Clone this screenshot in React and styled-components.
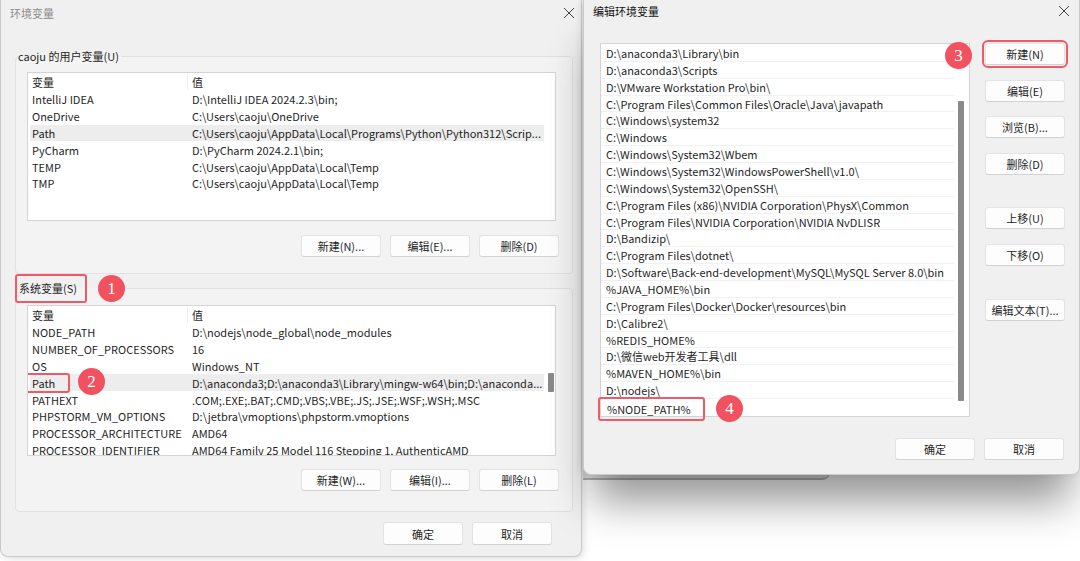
import React from "react";
import styled, { createGlobalStyle } from "styled-components";

const userVars = [
  ["IntelliJ IDEA", "D:\\IntelliJ IDEA 2024.2.3\\bin;"],
  ["OneDrive", "C:\\Users\\caoju\\OneDrive"],
  ["Path", "C:\\Users\\caoju\\AppData\\Local\\Programs\\Python\\Python312\\Scrip...", true],
  ["PyCharm", "D:\\PyCharm 2024.2.1\\bin;"],
  ["TEMP", "C:\\Users\\caoju\\AppData\\Local\\Temp"],
  ["TMP", "C:\\Users\\caoju\\AppData\\Local\\Temp"],
];

const sysVars = [
  ["NODE_PATH", "D:\\nodejs\\node_global\\node_modules"],
  ["NUMBER_OF_PROCESSORS", "16"],
  ["OS", "Windows_NT"],
  ["Path", "D:\\anaconda3;D:\\anaconda3\\Library\\mingw-w64\\bin;D:\\anaconda...", true],
  ["PATHEXT", ".COM;.EXE;.BAT;.CMD;.VBS;.VBE;.JS;.JSE;.WSF;.WSH;.MSC"],
  ["PHPSTORM_VM_OPTIONS", "D:\\jetbra\\vmoptions\\phpstorm.vmoptions"],
  ["PROCESSOR_ARCHITECTURE", "AMD64"],
  ["PROCESSOR_IDENTIFIER", "AMD64 Family 25 Model 116 Stepping 1, AuthenticAMD"],
];

const pathItems = [
  "D:\\anaconda3\\Library\\bin",
  "D:\\anaconda3\\Scripts",
  "D:\\VMware Workstation Pro\\bin\\",
  "C:\\Program Files\\Common Files\\Oracle\\Java\\javapath",
  "C:\\Windows\\system32",
  "C:\\Windows",
  "C:\\Windows\\System32\\Wbem",
  "C:\\Windows\\System32\\WindowsPowerShell\\v1.0\\",
  "C:\\Windows\\System32\\OpenSSH\\",
  "C:\\Program Files (x86)\\NVIDIA Corporation\\PhysX\\Common",
  "C:\\Program Files\\NVIDIA Corporation\\NVIDIA NvDLISR",
  "D:\\Bandizip\\",
  "C:\\Program Files\\dotnet\\",
  "D:\\Software\\Back-end-development\\MySQL\\MySQL Server 8.0\\bin",
  "%JAVA_HOME%\\bin",
  "C:\\Program Files\\Docker\\Docker\\resources\\bin",
  "D:\\Calibre2\\",
  "%REDIS_HOME%",
  "D:\\微信web开发者工具\\dll",
  "%MAVEN_HOME%\\bin",
  "D:\\nodejs\\",
];

function CloseIcon() {
  return (
    <svg width="12" height="12" viewBox="0 0 12 12">
      <path d="M1 1 L11 11 M11 1 L1 11" stroke="#444" strokeWidth="1" fill="none" />
    </svg>
  );
}

function VarList({ rows, height, top, thumb, marked }) {
  return (
    <ListBox $h={height} $top={top}>
      <VarRow $header>
        <Cell $divider>变量</Cell>
        <Cell>值</Cell>
      </VarRow>
      {rows.map(([name, value, sel]) => (
        <VarRow key={name} $selected={sel}>
          <Cell>
            {sel && marked ? (
              <Marked>
                {name}
                <Badge $left={52} $top={-7}>2</Badge>
              </Marked>
            ) : (
              name
            )}
          </Cell>
          <Cell>{value}</Cell>
        </VarRow>
      ))}
      {thumb && <Thumb $top={thumb[0]} $h={thumb[1]} />}
    </ListBox>
  );
}

export default function App() {
  return (
    <>
      <GlobalStyle />
      <Desktop>
        <BackWindow />
        <Window $left={0} $top={0} $w={582} $h={557} $z={1}>
          <TitleBar>
            <Title $inactive>环境变量</Title>
            <CloseButton $right={6}>
              <CloseIcon />
            </CloseButton>
          </TitleBar>
          <LeftBody>
            <Group $top={22}>
              <Legend>caoju 的用户变量(U)</Legend>
              <VarList rows={userVars} height={149} top={7} />
              <ButtonRow>
                <Button>新建(N)...</Button>
                <Button>编辑(E)...</Button>
                <Button>删除(D)</Button>
              </ButtonRow>
            </Group>
            <Group $top={0} $bottom={20}>
              <Legend $gap={11}>
                <LegendBox>系统变量(S)</LegendBox>
                <Badge $static>1</Badge>
              </Legend>
              <VarList rows={sysVars} height={151} top={2} thumb={[67, 19]} marked />
              <ButtonRow $top={13}>
                <Button>新建(W)...</Button>
                <Button>编辑(I)...</Button>
                <Button>删除(L)</Button>
              </ButtonRow>
            </Group>
            <Footer $pad={21}>
              <Button $h={23}>确定</Button>
              <Button $h={23}>取消</Button>
            </Footer>
          </LeftBody>
        </Window>

        <Window $left={583} $top={0} $w={497} $h={475} $z={2} $shadow>
          <TitleBar $h={22}>
            <Title>编辑环境变量</Title>
            <CloseButton $right={9}>
              <CloseIcon />
            </CloseButton>
          </TitleBar>
          <EditBody>
            <PathList>
              {pathItems.map(p => (
                <PathRow key={p}>{p}</PathRow>
              ))}
              <PathRow $editing>
                <EditBox>
                  %NODE_PATH%
                  <Badge $left={116} $top={-4}>4</Badge>
                </EditBox>
              </PathRow>
              <Thumb $top={57} $h={300} $right={5} />
            </PathList>
            <SideButtons>
              <Button $marked>
                新建(N)
                <Badge $left={-41} $top={-2}>3</Badge>
              </Button>
              <Button>编辑(E)</Button>
              <Button>浏览(B)...</Button>
              <Button>删除(D)</Button>
              <Button $space={18}>上移(U)</Button>
              <Button>下移(O)</Button>
              <Button $space={18}>编辑文本(T)...</Button>
            </SideButtons>
          </EditBody>
          <Footer $pad={15} $top={21}>
            <Button>确定</Button>
            <Button>取消</Button>
          </Footer>
        </Window>
      </Desktop>
    </>
  );
}

const GlobalStyle = createGlobalStyle`
  html, body {
    margin: 0;
    padding: 0;
    background: #ffffff;
  }
  body {
    font-family: "Noto Sans CJK SC", "Noto Sans", sans-serif;
    font-size: 11px;
    color: #1f1f1f;
  }
`;

const Desktop = styled.div`
  position: relative;
  width: 1080px;
  height: 561px;
  overflow: hidden;
  background: #ffffff;
`;

const BackWindow = styled.div`
  position: absolute;
  left: 583px;
  top: 380px;
  width: 247px;
  height: 98px;
  background: #e4e4e4;
  border-bottom: 2px solid #b4b4b4;
  border-radius: 0 0 8px 0;
`;

const Window = styled.div`
  position: absolute;
  left: ${p => p.$left}px;
  top: ${p => p.$top}px;
  width: ${p => p.$w}px;
  height: ${p => p.$h}px;
  z-index: ${p => p.$z};
  box-sizing: border-box;
  background: #f0f0f0;
  border: 1px solid #c9c9c9;
  border-top: none;
  border-radius: 0 0 8px 8px;
  display: flex;
  flex-direction: column;
  box-shadow: ${p =>
    p.$shadow
      ? "0 36px 40px -10px rgba(0,0,0,0.42), -3px 0 6px rgba(0,0,0,0.08)"
      : "2px 2px 6px rgba(0,0,0,0.12)"};
`;

const TitleBar = styled.div`
  position: relative;
  height: ${p => p.$h || 26}px;
  flex: none;
  display: flex;
  align-items: center;
  padding-left: 9px;
`;

const Title = styled.div`
  font-size: 11px;
  color: ${p => (p.$inactive ? "#8c8c8c" : "#111")};
`;

const CloseButton = styled.div`
  position: absolute;
  right: ${p => p.$right}px;
  top: 50%;
  transform: translateY(-50%);
  display: flex;
`;

const LeftBody = styled.div`
  display: flex;
  flex-direction: column;
  padding-left: 14px;
  padding-right: 8px;
`;

const Group = styled.fieldset`
  margin: ${p => p.$top}px 0 0 0;
  padding: 0 16px ${p => p.$bottom || 16}px 11px;
  border: 1px solid #e1e1e1;
  border-radius: 4px;
  background: #f3f3f3;
  min-width: 0;
`;

const Legend = styled.legend`
  display: flex;
  align-items: center;
  gap: ${p => p.$gap || 14}px;
  padding: 0 2px 0 0;
  margin-left: -9px;
  line-height: 17px;
  font-size: 11px;
  color: #1f1f1f;
`;

const LegendBox = styled.span`
  border: 2px solid #ef5a66;
  border-radius: 3px;
  padding: 4px 8px 4px 2px;
  margin-left: -3px;
`;

const Badge = styled.span`
  position: ${p => (p.$static ? "static" : "absolute")};
  left: ${p => p.$left}px;
  top: ${p => p.$top}px;
  width: 27px;
  height: 27px;
  border-radius: 50%;
  background: #f0525f;
  color: #fff;
  font-family: "Liberation Serif", serif;
  font-size: 17px;
  display: flex;
  align-items: center;
  justify-content: center;
  line-height: 1;
`;

const ListBox = styled.div`
  position: relative;
  margin-top: ${p => p.$top}px;
  height: ${p => p.$h}px;
  background: #ffffff;
  border: 1px solid #d4d4d4;
  box-sizing: border-box;
  padding: 1px 11px 0 2px;
  overflow: hidden;
`;

const VarRow = styled.div`
  display: grid;
  grid-template-columns: 160px 1fr;
  height: 16.85px;
  align-items: center;
  background: ${p => (p.$selected ? "#ededed" : "transparent")};
`;

const Cell = styled.div`
  padding-left: 2px;
  white-space: nowrap;
  overflow: visible;
  line-height: 16px;
  border-right: ${p => (p.$divider ? "1px solid #eeeeee" : "none")};
  margin-right: ${p => (p.$divider ? "2px" : "0")};
`;

const Marked = styled.span`
  position: relative;
  display: inline-block;
  border: 2px solid #ef5a66;
  border-radius: 3px;
  margin: -2px 0 -2px -8px;
  padding: 0 13px 0 6px;
`;

const Thumb = styled.div`
  position: absolute;
  right: ${p => (p.$right != null ? p.$right : 1)}px;
  top: ${p => p.$top}px;
  width: 6px;
  height: ${p => p.$h}px;
  background: #8a8a8a;
  border-radius: 1px;
`;

const ButtonRow = styled.div`
  display: flex;
  justify-content: flex-end;
  gap: 9px;
  margin-top: ${p => p.$top || 14}px;
  margin-right: -3px;
`;

const Button = styled.div`
  position: relative;
  width: 80px;
  height: ${p => p.$h || 22}px;
  box-sizing: border-box;
  display: flex;
  align-items: center;
  justify-content: center;
  background: #fdfdfd;
  border: 1px solid #e3e3e3;
  border-bottom-color: #d2d2d2;
  border-radius: 3px;
  font-size: 11px;
  color: #1f1f1f;
  margin-top: ${p => p.$space || 0}px;
  outline: ${p => (p.$marked ? "2px solid #ef5a66" : "none")};
  outline-offset: 1px;
`;

const Footer = styled.div`
  display: flex;
  justify-content: flex-end;
  gap: 9px;
  margin-top: ${p => p.$top || 10}px;
  padding-right: ${p => p.$pad}px;
`;

const EditBody = styled.div`
  display: flex;
  gap: 15px;
  padding-left: 16px;
  margin-top: 21px;
`;

const PathList = styled.div`
  position: relative;
  width: 370px;
  height: 374px;
  box-sizing: border-box;
  background: #ffffff;
  border: 1px solid #d4d4d4;
  padding: 1px 15px 0 0;
`;

const PathRow = styled.div`
  height: 16.86px;
  box-sizing: border-box;
  padding-left: 5px;
  display: flex;
  align-items: center;
  white-space: nowrap;
  border-bottom: ${p => (p.$editing ? "none" : "1px solid #f1f1f1")};
`;

const EditBox = styled.span`
  position: relative;
  display: inline-block;
  margin-left: -8px;
  padding: 2px 12px 2px 7px;
  margin-top: 4px;
  border: 2px solid #ef5a66;
  border-radius: 3px;
`;

const SideButtons = styled.div`
  display: flex;
  flex-direction: column;
  gap: 14.6px;
  padding-top: 0;
`;
